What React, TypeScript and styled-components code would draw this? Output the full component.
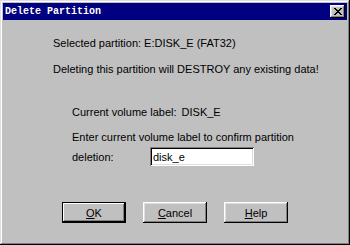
import React from "react";
import styled, { createGlobalStyle } from "styled-components";

const Global = createGlobalStyle`
  html, body { margin: 0; padding: 0; background: #c0c0c0; }
  * { box-sizing: border-box; }
`;

const Window = styled.div`
  width: 350px;
  height: 245px;
  background: #c0c0c0;
  padding: 3px;
  display: flex;
  flex-direction: column;
  box-shadow: inset -1px -1px #000, inset 1px 1px #dfdfdf,
    inset -2px -2px #808080, inset 2px 2px #fff;
  font-family: "Liberation Sans", Arial, sans-serif;
  font-size: 11px;
  color: #000;
`;

const TitleBar = styled.div`
  height: 17px;
  background: #000080;
  display: flex;
  align-items: center;
  justify-content: space-between;
  padding: 0 2px 0 2px;
`;

const Title = styled.span`
  color: #fff;
  font-family: "Liberation Mono", "Courier New", monospace;
  font-weight: bold;
  font-size: 10px;
`;

const CloseButton = styled.button`
  width: 15px;
  height: 13px;
  padding: 0;
  border: none;
  background: #c0c0c0;
  box-shadow: inset -1px -1px #000, inset 1px 1px #fff,
    inset -2px -2px #808080, inset 2px 2px #dfdfdf;
  display: flex;
  align-items: center;
  justify-content: center;
`;

const Content = styled.div`
  flex: 1;
  display: flex;
  flex-direction: column;
  padding: 17px 0 0 50px;
`;

const Line = styled.p<{ $gap?: number }>`
  margin: ${(p) => p.$gap ?? 0}px 0 0 0;
  line-height: 13px;
  white-space: nowrap;
`;

const Section = styled.div`
  display: flex;
  flex-direction: column;
  padding-left: 19px;
`;

const Value = styled.span`
  margin-left: 5px;
`;

const FieldRow = styled.div`
  display: flex;
  align-items: center;
  margin-top: 3px;
`;

const FieldLabel = styled.span`
  width: 78px;
  line-height: 13px;
  padding-top: 2px;
`;

const TextField = styled.input`
  width: 104px;
  height: 19px;
  border: none;
  outline: none;
  background: #fff;
  padding: 0 3px;
  font-family: "Liberation Sans", Arial, sans-serif;
  font-size: 11px;
  color: #000;
  box-shadow: inset 1px 1px #808080, inset -1px -1px #fff,
    inset 2px 2px #000, inset -2px -2px #dfdfdf;
`;

const ButtonRow = styled.div`
  display: flex;
  justify-content: center;
  gap: 17px;
  margin: 36px 0 0 -50px;
`;

const Button = styled.button<{ $default?: boolean }>`
  width: 64px;
  height: 21px;
  padding: 0;
  border: none;
  background: #c0c0c0;
  font-family: "Liberation Sans", Arial, sans-serif;
  font-size: 11px;
  color: #000;
  box-shadow: ${(p) =>
    p.$default
      ? "inset -1px -1px #000, inset 1px 1px #000, inset -2px -2px #000, inset 2px 2px #fff, inset -3px -3px #808080"
      : "inset -1px -1px #000, inset 1px 1px #fff, inset -2px -2px #808080, inset 2px 2px #dfdfdf"};
`;

const Key = styled.u`
  text-decoration: underline;
`;

export default function App() {
  return (
    <>
      <Global />
      <Window>
        <TitleBar>
          <Title>Delete Partition</Title>
          <CloseButton aria-label="Close">
            <svg width="8" height="7" viewBox="0 0 8 7">
              <path
                d="M0 0h2v1h1v1h2V1h1V0h2v1H7v1H6v1H5v1h1v1h1v1h1v1H6V6H5V5H3v1H2v1H0V6h1V5h1V4h1V3H2V2H1V1H0z"
                fill="#000"
              />
            </svg>
          </CloseButton>
        </TitleBar>
        <Content>
          <Line>Selected partition: E:DISK_E (FAT32)</Line>
          <Line $gap={13}>Deleting this partition will DESTROY any existing data!</Line>
          <Section>
            <Line $gap={30}>
              Current volume label:<Value>DISK_E</Value>
            </Line>
            <Line $gap={12}>Enter current volume label to confirm partition</Line>
            <FieldRow>
              <FieldLabel>deletion:</FieldLabel>
              <TextField defaultValue="disk_e" />
            </FieldRow>
          </Section>
          <ButtonRow>
            <Button $default>
              <Key>O</Key>K
            </Button>
            <Button>
              <Key>C</Key>ancel
            </Button>
            <Button>
              <Key>H</Key>elp
            </Button>
          </ButtonRow>
        </Content>
      </Window>
    </>
  );
}
